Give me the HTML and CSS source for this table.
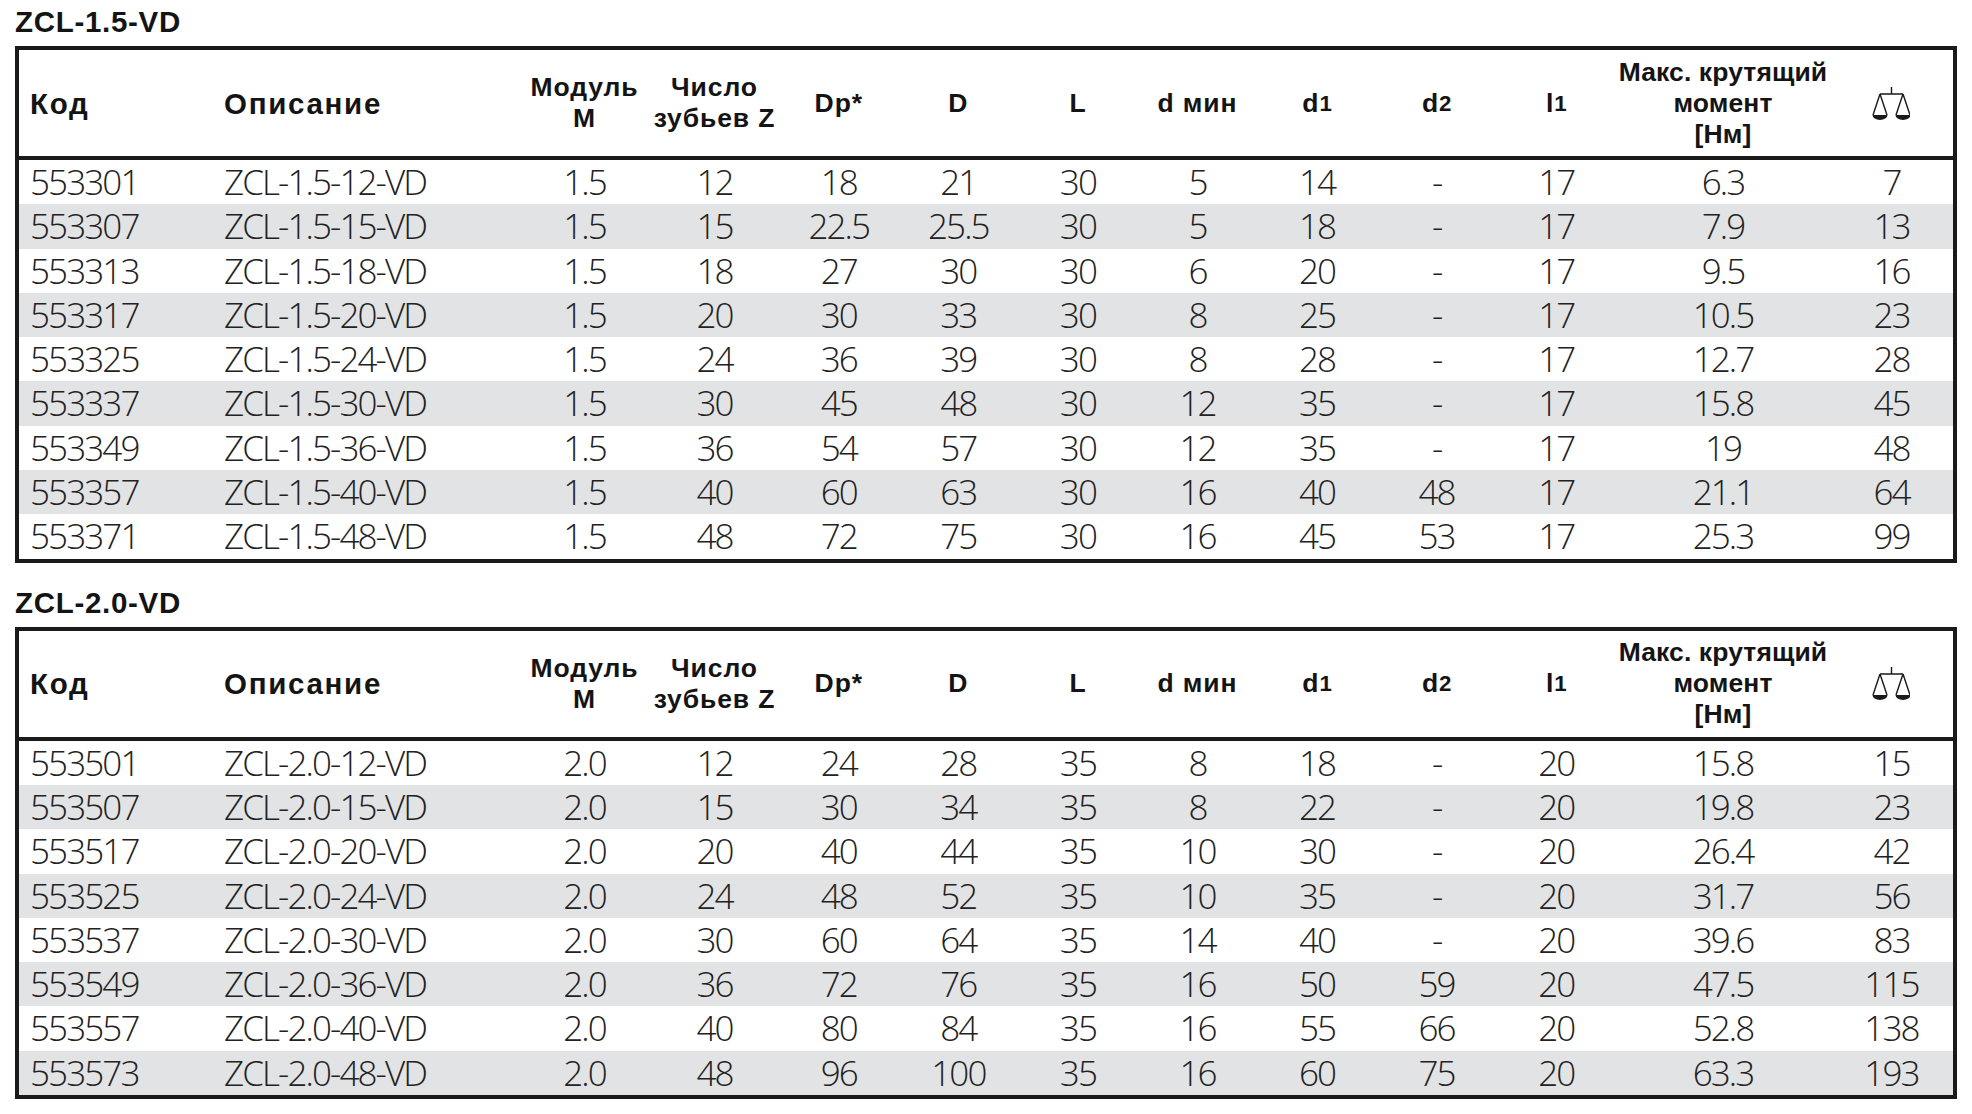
FILE: index.html
```html
<!DOCTYPE html>
<html lang="ru">
<head>
<meta charset="utf-8">
<title>ZCL-VD</title>
<link rel="stylesheet" href="styles.css">
</head>
<body>
<div class="page">
  <section class="section">
    <h2 class="title">ZCL-1.5-VD</h2>
    <div class="frame">
      <div class="row head">
        <div class="c l big">Код</div>
        <div class="c l2 big">Описание</div>
        <div class="c">Модуль<br>M</div>
        <div class="c">Число<br>зубьев Z</div>
        <div class="c">Dp*</div>
        <div class="c">D</div>
        <div class="c">L</div>
        <div class="c">d мин</div>
        <div class="c">d<span class="idx">1</span></div>
        <div class="c">d<span class="idx">2</span></div>
        <div class="c">l<span class="idx">1</span></div>
        <div class="c torque">Макс. крутящий<br>момент<br>[Нм]</div>
        <div class="c"><svg class="scale" viewBox="0 0 38 33" width="38" height="33"><path d="M19.5 0V7M8 7H31M8 7L1 28M8 7L15 28M31 7L24 28M31 7L38 28" fill="none" stroke="#1a1a1a" stroke-width="1.4"/><path d="M0.5 28H15.5A7.5 5 0 0 1 0.5 28Z M23.5 28H38.5A7.5 5 0 0 1 23.5 28Z" fill="#1a1a1a"/></svg></div>
      </div>
      <div class="row"><div class="c l">553301</div><div class="c l2">ZCL-1.5-12-VD</div><div class="c">1.5</div><div class="c">12</div><div class="c">18</div><div class="c">21</div><div class="c">30</div><div class="c">5</div><div class="c">14</div><div class="c">-</div><div class="c">17</div><div class="c">6.3</div><div class="c">7</div></div>
      <div class="row"><div class="c l">553307</div><div class="c l2">ZCL-1.5-15-VD</div><div class="c">1.5</div><div class="c">15</div><div class="c">22.5</div><div class="c">25.5</div><div class="c">30</div><div class="c">5</div><div class="c">18</div><div class="c">-</div><div class="c">17</div><div class="c">7.9</div><div class="c">13</div></div>
      <div class="row"><div class="c l">553313</div><div class="c l2">ZCL-1.5-18-VD</div><div class="c">1.5</div><div class="c">18</div><div class="c">27</div><div class="c">30</div><div class="c">30</div><div class="c">6</div><div class="c">20</div><div class="c">-</div><div class="c">17</div><div class="c">9.5</div><div class="c">16</div></div>
      <div class="row"><div class="c l">553317</div><div class="c l2">ZCL-1.5-20-VD</div><div class="c">1.5</div><div class="c">20</div><div class="c">30</div><div class="c">33</div><div class="c">30</div><div class="c">8</div><div class="c">25</div><div class="c">-</div><div class="c">17</div><div class="c">10.5</div><div class="c">23</div></div>
      <div class="row"><div class="c l">553325</div><div class="c l2">ZCL-1.5-24-VD</div><div class="c">1.5</div><div class="c">24</div><div class="c">36</div><div class="c">39</div><div class="c">30</div><div class="c">8</div><div class="c">28</div><div class="c">-</div><div class="c">17</div><div class="c">12.7</div><div class="c">28</div></div>
      <div class="row"><div class="c l">553337</div><div class="c l2">ZCL-1.5-30-VD</div><div class="c">1.5</div><div class="c">30</div><div class="c">45</div><div class="c">48</div><div class="c">30</div><div class="c">12</div><div class="c">35</div><div class="c">-</div><div class="c">17</div><div class="c">15.8</div><div class="c">45</div></div>
      <div class="row"><div class="c l">553349</div><div class="c l2">ZCL-1.5-36-VD</div><div class="c">1.5</div><div class="c">36</div><div class="c">54</div><div class="c">57</div><div class="c">30</div><div class="c">12</div><div class="c">35</div><div class="c">-</div><div class="c">17</div><div class="c">19</div><div class="c">48</div></div>
      <div class="row"><div class="c l">553357</div><div class="c l2">ZCL-1.5-40-VD</div><div class="c">1.5</div><div class="c">40</div><div class="c">60</div><div class="c">63</div><div class="c">30</div><div class="c">16</div><div class="c">40</div><div class="c">48</div><div class="c">17</div><div class="c">21.1</div><div class="c">64</div></div>
      <div class="row"><div class="c l">553371</div><div class="c l2">ZCL-1.5-48-VD</div><div class="c">1.5</div><div class="c">48</div><div class="c">72</div><div class="c">75</div><div class="c">30</div><div class="c">16</div><div class="c">45</div><div class="c">53</div><div class="c">17</div><div class="c">25.3</div><div class="c">99</div></div>
    </div>
  </section>

  <section class="section">
    <h2 class="title">ZCL-2.0-VD</h2>
    <div class="frame">
      <div class="row head">
        <div class="c l big">Код</div>
        <div class="c l2 big">Описание</div>
        <div class="c">Модуль<br>M</div>
        <div class="c">Число<br>зубьев Z</div>
        <div class="c">Dp*</div>
        <div class="c">D</div>
        <div class="c">L</div>
        <div class="c">d мин</div>
        <div class="c">d<span class="idx">1</span></div>
        <div class="c">d<span class="idx">2</span></div>
        <div class="c">l<span class="idx">1</span></div>
        <div class="c torque">Макс. крутящий<br>момент<br>[Нм]</div>
        <div class="c"><svg class="scale" viewBox="0 0 38 33" width="38" height="33"><path d="M19.5 0V7M8 7H31M8 7L1 28M8 7L15 28M31 7L24 28M31 7L38 28" fill="none" stroke="#1a1a1a" stroke-width="1.4"/><path d="M0.5 28H15.5A7.5 5 0 0 1 0.5 28Z M23.5 28H38.5A7.5 5 0 0 1 23.5 28Z" fill="#1a1a1a"/></svg></div>
      </div>
      <div class="row"><div class="c l">553501</div><div class="c l2">ZCL-2.0-12-VD</div><div class="c">2.0</div><div class="c">12</div><div class="c">24</div><div class="c">28</div><div class="c">35</div><div class="c">8</div><div class="c">18</div><div class="c">-</div><div class="c">20</div><div class="c">15.8</div><div class="c">15</div></div>
      <div class="row"><div class="c l">553507</div><div class="c l2">ZCL-2.0-15-VD</div><div class="c">2.0</div><div class="c">15</div><div class="c">30</div><div class="c">34</div><div class="c">35</div><div class="c">8</div><div class="c">22</div><div class="c">-</div><div class="c">20</div><div class="c">19.8</div><div class="c">23</div></div>
      <div class="row"><div class="c l">553517</div><div class="c l2">ZCL-2.0-20-VD</div><div class="c">2.0</div><div class="c">20</div><div class="c">40</div><div class="c">44</div><div class="c">35</div><div class="c">10</div><div class="c">30</div><div class="c">-</div><div class="c">20</div><div class="c">26.4</div><div class="c">42</div></div>
      <div class="row"><div class="c l">553525</div><div class="c l2">ZCL-2.0-24-VD</div><div class="c">2.0</div><div class="c">24</div><div class="c">48</div><div class="c">52</div><div class="c">35</div><div class="c">10</div><div class="c">35</div><div class="c">-</div><div class="c">20</div><div class="c">31.7</div><div class="c">56</div></div>
      <div class="row"><div class="c l">553537</div><div class="c l2">ZCL-2.0-30-VD</div><div class="c">2.0</div><div class="c">30</div><div class="c">60</div><div class="c">64</div><div class="c">35</div><div class="c">14</div><div class="c">40</div><div class="c">-</div><div class="c">20</div><div class="c">39.6</div><div class="c">83</div></div>
      <div class="row"><div class="c l">553549</div><div class="c l2">ZCL-2.0-36-VD</div><div class="c">2.0</div><div class="c">36</div><div class="c">72</div><div class="c">76</div><div class="c">35</div><div class="c">16</div><div class="c">50</div><div class="c">59</div><div class="c">20</div><div class="c">47.5</div><div class="c">115</div></div>
      <div class="row"><div class="c l">553557</div><div class="c l2">ZCL-2.0-40-VD</div><div class="c">2.0</div><div class="c">40</div><div class="c">80</div><div class="c">84</div><div class="c">35</div><div class="c">16</div><div class="c">55</div><div class="c">66</div><div class="c">20</div><div class="c">52.8</div><div class="c">138</div></div>
      <div class="row"><div class="c l">553573</div><div class="c l2">ZCL-2.0-48-VD</div><div class="c">2.0</div><div class="c">48</div><div class="c">96</div><div class="c">100</div><div class="c">35</div><div class="c">16</div><div class="c">60</div><div class="c">75</div><div class="c">20</div><div class="c">63.3</div><div class="c">193</div></div>
    </div>
  </section>
</div>
</body>
</html>
```

FILE: styles.css
```css
html, body {
  margin: 0;
  padding: 0;
  background: #ffffff;
}

body {
  font-family: "Liberation Sans", Arial, sans-serif;
  color: #1a1a1a;
}

.page {
  padding: 5px 0 0 15px;
  width: 1942px;
}

.section + .section {
  margin-top: 23px;
}

.title {
  margin: 0 0 7px 0;
  font-family: "Liberation Sans", Arial, sans-serif;
  font-weight: bold;
  font-size: 29.5px;
  line-height: 34px;
  letter-spacing: 0.7px;
  color: #141414;
}

.frame {
  box-sizing: border-box;
  width: 1942px;
  border: 4px solid #1a1a1a;
}

.row {
  display: grid;
  grid-template-columns: 195px 305px 131px 129px repeat(7, 1fr) 214px 123px;
  height: 44.3px;
}

.row:nth-child(odd) {
  background: #e2e3e5;
}

.row.head {
  height: 106px;
  border-bottom: 4px solid #1a1a1a;
  background: #ffffff;
}

.c {
  display: flex;
  align-items: center;
  justify-content: center;
  text-align: center;
  white-space: nowrap;
  font-family: "Open Sans", "Liberation Sans", sans-serif;
  font-weight: 300;
  font-stretch: 100%;
  font-size: 35px;
  line-height: 44.3px;
  letter-spacing: -1.9px;
  color: #222222;
}

.c.l {
  justify-content: flex-start;
  padding-left: 11px;
}

.c.l2 {
  justify-content: flex-start;
  padding-left: 10px;
}

.head .c {
  font-family: "Liberation Sans", Arial, sans-serif;
  font-weight: bold;
  font-size: 26.5px;
  line-height: 31px;
  letter-spacing: 0.9px;
  color: #141414;
}

.head .c.torque {
  letter-spacing: 0.1px;
}

.head .c.big {
  font-size: 29.5px;
  letter-spacing: 1.7px;
}

.idx {
  font-size: 0.84em;
  letter-spacing: 0;
}

.scale {
  display: block;
}
```
